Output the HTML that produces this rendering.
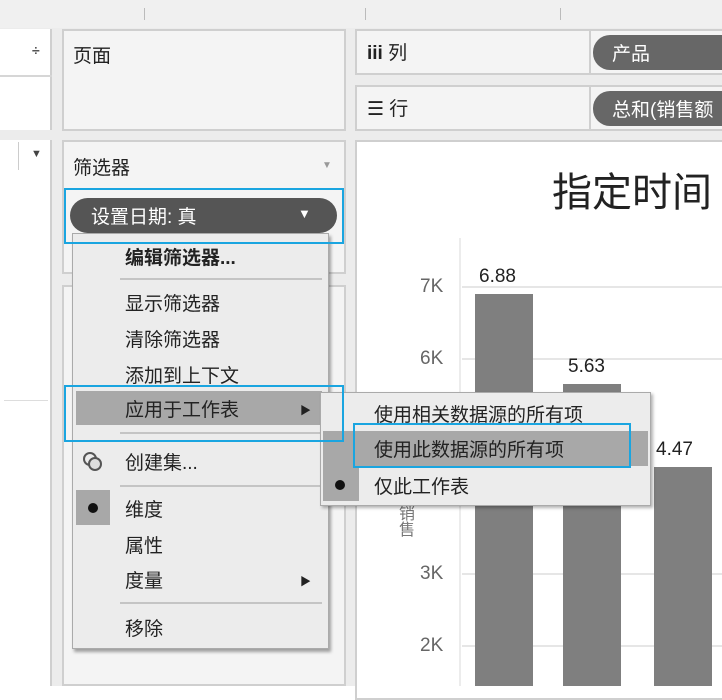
<!DOCTYPE html>
<html><head><meta charset="utf-8"><style>
*{margin:0;padding:0;box-sizing:border-box}
body{width:722px;height:686px;overflow:hidden;background:#fff;position:relative;font-family:"Liberation Sans","Noto Sans CJK SC",sans-serif;color:#222}
.a{position:absolute}
.t{position:absolute;font-size:19px;line-height:22px;white-space:nowrap;margin-top:2px}
.card{position:absolute;background:#f4f4f4;border:2px solid #cfcfcf}
.sep{position:absolute;height:2px;background:#c4c4c4}
.grid{position:absolute;left:462px;width:260px;height:2px;background:#e6e6e6}
.yl{position:absolute;font-size:19px;color:#666;left:420px;margin-top:2px}
.bar{position:absolute;background:#7f7f7f;bottom:0}
.vl{position:absolute;font-size:19px;color:#222;margin-top:2px}
</style></head><body>
<div class="a" style="left:0;top:0;width:722px;height:28px;background:#f0f0f0"></div>
<div class="a" style="left:144px;top:8px;width:1px;height:12px;background:#bbb"></div>
<div class="a" style="left:365px;top:8px;width:1px;height:12px;background:#bbb"></div>
<div class="a" style="left:560px;top:8px;width:1px;height:12px;background:#bbb"></div>
<div class="a" style="left:0;top:28px;width:722px;height:658px;background:#ececec"></div>
<div class="a" style="left:0;top:29px;width:52px;height:101px;background:#fff;border-right:2px solid #cfcfcf"></div>
<div class="a" style="left:0;top:75px;width:52px;height:2px;background:#d6d6d6"></div>
<div class="a" style="left:32px;top:42px;font-size:14px;color:#555;font-weight:bold">÷</div>
<div class="a" style="left:0;top:140px;width:52px;height:546px;background:#fff;border-right:2px solid #cfcfcf"></div>
<div class="a" style="left:18px;top:142px;width:1px;height:28px;background:#ccc"></div>
<div class="a" style="left:31px;top:148px;font-size:11px;color:#444">▼</div>
<div class="a" style="left:4px;top:400px;width:44px;height:1px;background:#ddd"></div>
<div class="card" style="left:62px;top:29px;width:284px;height:102px"></div>
<div class="t" style="left:73px;top:44px">页面</div>
<div class="card" style="left:62px;top:140px;width:284px;height:134px"></div>
<div class="t" style="left:73px;top:156px">筛选器</div>
<div class="a" style="left:322px;top:160px;font-size:10px;color:#999">▼</div>
<div class="card" style="left:62px;top:285px;width:284px;height:401px"></div>
<div class="a" style="left:70px;top:198px;width:267px;height:35px;background:#555;border-radius:18px"></div>
<div class="t" style="left:91px;top:205px;color:#fff">设置日期: 真</div>
<div class="a" style="left:298px;top:206px;font-size:13px;color:#fff">▼</div>
<div class="card" style="left:355px;top:29px;width:380px;height:46px"></div>
<div class="a" style="left:589px;top:30px;width:2px;height:44px;background:#cfcfcf"></div>
<div class="t" style="left:367px;top:41px;font-weight:bold">iii <span style="font-weight:normal">列</span></div>
<div class="a" style="left:593px;top:35px;width:140px;height:35px;background:#676767;border-radius:17px 0 0 17px"></div>
<div class="t" style="left:612px;top:42px;color:#fff">产品</div>
<div class="card" style="left:355px;top:85px;width:380px;height:46px"></div>
<div class="a" style="left:589px;top:86px;width:2px;height:44px;background:#cfcfcf"></div>
<div class="t" style="left:367px;top:97px">☰ 行</div>
<div class="a" style="left:593px;top:91px;width:140px;height:35px;background:#676767;border-radius:17px 0 0 17px"></div>
<div class="t" style="left:612px;top:98px;color:#fff">总和(销售额</div>
<div class="a" style="left:355px;top:140px;width:380px;height:560px;background:#fff;border:2px solid #cfcfcf"></div>
<div class="a" style="left:552px;top:170px;font-size:40px;line-height:46px;color:#222">指定时间</div>
<div class="a" style="left:459px;top:238px;width:2px;height:448px;background:#ececec"></div>
<div class="grid" style="top:286px"></div><div class="yl" style="top:274px">7K</div>
<div class="grid" style="top:358px"></div><div class="yl" style="top:346px">6K</div>
<div class="grid" style="top:573px"></div><div class="yl" style="top:561px">3K</div>
<div class="grid" style="top:645px"></div><div class="yl" style="top:633px">2K</div>
<div class="a" style="left:392px;top:505px;font-size:16px;color:#777;writing-mode:vertical-rl">销售</div>
<div class="bar" style="left:475px;top:294px;width:58px"></div>
<div class="bar" style="left:563px;top:384px;width:58px"></div>
<div class="bar" style="left:654px;top:467px;width:58px"></div>
<div class="vl" style="left:479px;top:264px">6.88</div>
<div class="vl" style="left:568px;top:354px">5.63</div>
<div class="vl" style="left:656px;top:437px">4.47</div>
<div class="a" style="left:72px;top:233px;width:257px;height:416px;background:#ececec;border:1px solid #aaa;box-shadow:2px 3px 3px rgba(0,0,0,.35)"></div>
<div class="t" style="left:125px;top:246px;font-weight:bold">编辑筛选器...</div>
<div class="sep" style="left:120px;top:278px;width:202px"></div>
<div class="t" style="left:125px;top:292px">显示筛选器</div>
<div class="t" style="left:125px;top:328px">清除筛选器</div>
<div class="t" style="left:125px;top:364px">添加到上下文</div>
<div class="a" style="left:76px;top:391px;width:246px;height:34px;background:#a8a8a8"></div>
<div class="t" style="left:125px;top:398px">应用于工作表</div>
<div class="a" style="left:300px;top:402px;font-size:11px">▶</div>
<div class="sep" style="left:120px;top:432px;width:202px"></div>
<svg class="a" style="left:82px;top:451px" width="22" height="22"><circle cx="8" cy="8" r="6" fill="none" stroke="#555" stroke-width="2"/><circle cx="13" cy="13" r="6" fill="#ddd" stroke="#555" stroke-width="2"/></svg>
<div class="t" style="left:125px;top:451px">创建集...</div>
<div class="sep" style="left:120px;top:485px;width:202px"></div>
<div class="a" style="left:76px;top:490px;width:34px;height:35px;background:#a8a8a8"></div>
<div class="a" style="left:88px;top:503px;width:10px;height:10px;border-radius:5px;background:#111"></div>
<div class="t" style="left:125px;top:498px">维度</div>
<div class="t" style="left:125px;top:534px">属性</div>
<div class="t" style="left:125px;top:569px">度量</div>
<div class="a" style="left:300px;top:573px;font-size:11px">▶</div>
<div class="sep" style="left:120px;top:602px;width:202px"></div>
<div class="t" style="left:125px;top:617px">移除</div>
<div class="a" style="left:320px;top:392px;width:331px;height:114px;background:#ececec;border:1px solid #aaa;box-shadow:2px 2px 3px rgba(0,0,0,.3)"></div>
<div class="a" style="left:323px;top:431px;width:36px;height:70px;background:#a8a8a8"></div>
<div class="a" style="left:323px;top:431px;width:325px;height:35px;background:#a8a8a8"></div>
<div class="a" style="left:335px;top:480px;width:10px;height:10px;border-radius:5px;background:#111"></div>
<div class="t" style="left:374px;top:403px">使用相关数据源的所有项</div>
<div class="t" style="left:374px;top:438px">使用此数据源的所有项</div>
<div class="t" style="left:374px;top:475px">仅此工作表</div>
<div class="a" style="left:64px;top:188px;width:280px;height:56px;border:2px solid #1aa5e0"></div>
<div class="a" style="left:64px;top:385px;width:280px;height:57px;border:2px solid #1aa5e0"></div>
<div class="a" style="left:353px;top:423px;width:278px;height:45px;border:2px solid #1aa5e0"></div>
</body></html>
